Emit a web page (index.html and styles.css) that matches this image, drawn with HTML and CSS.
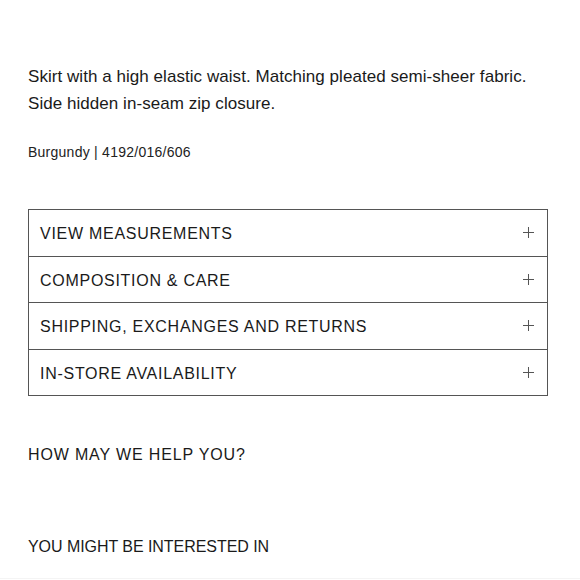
FILE: index.html
```html
<!DOCTYPE html>
<html>
<head>
<meta charset="utf-8">
<link rel="stylesheet" href="styles.css">
</head>
<body>
<main class="page">
  <p class="desc">Skirt with a high elastic waist. Matching pleated semi-sheer fabric.<br>Side hidden in-seam zip closure.</p>
  <p class="ref">Burgundy | 4192/016/606</p>
  <ul class="accordion">
    <li class="acc-row"><span>VIEW MEASUREMENTS</span><svg class="plus" viewBox="0 0 12 12"><path d="M6 0V12M0 6H12"/></svg></li>
    <li class="acc-row"><span>COMPOSITION &amp; CARE</span><svg class="plus" viewBox="0 0 12 12"><path d="M6 0V12M0 6H12"/></svg></li>
    <li class="acc-row"><span>SHIPPING, EXCHANGES AND RETURNS</span><svg class="plus" viewBox="0 0 12 12"><path d="M6 0V12M0 6H12"/></svg></li>
    <li class="acc-row"><span>IN-STORE AVAILABILITY</span><svg class="plus" viewBox="0 0 12 12"><path d="M6 0V12M0 6H12"/></svg></li>
  </ul>
  <h2 class="heading help">HOW MAY WE HELP YOU?</h2>
  <h2 class="heading interest">YOU MIGHT BE INTERESTED IN</h2>
</main>
<div class="bottom-line"></div>
</body>
</html>
```
FILE: styles.css
```css
html, body {
  margin: 0;
  padding: 0;
  background: #fff;
}
body {
  font-family: "Liberation Sans", Arial, sans-serif;
  color: #1a1a1a;
  width: 580px;
  height: 580px;
  overflow: hidden;
  display: flex;
  flex-direction: column;
}
.page {
  padding: 63px 32px 0 28px;
  flex: 1;
}
.desc {
  margin: 0;
  font-size: 17px;
  line-height: 27px;
  letter-spacing: 0.05px;
}
.ref {
  margin: 26px 0 0;
  font-size: 14px;
  line-height: 18px;
  letter-spacing: 0.25px;
  color: #222;
}
.accordion {
  list-style: none;
  margin: 48px 0 0;
  padding: 0;
  border: 1px solid #555;
}
.acc-row {
  height: 45.5px;
  display: flex;
  align-items: center;
  justify-content: space-between;
  padding: 0 13px 0 11px;
  font-size: 16px;
  letter-spacing: 0.72px;
  border-top: 1px solid #555;
}
.acc-row:first-child {
  border-top: none;
}
.acc-row span {
  padding-top: 3px;
}
.plus {
  width: 11px;
  height: 11px;
  stroke: #555;
  stroke-width: 1.1;
  fill: none;
  margin-top: 0;
}
.heading {
  margin: 0;
  font-weight: normal;
  font-size: 16px;
  line-height: 20px;
}
.help {
  margin-top: 49px;
  letter-spacing: 0.85px;
}
.interest {
  margin-top: 72px;
  letter-spacing: -0.05px;
}
.bottom-line {
  height: 1px;
  background: #f4f4f4;
  margin-bottom: 1px;
}
```
